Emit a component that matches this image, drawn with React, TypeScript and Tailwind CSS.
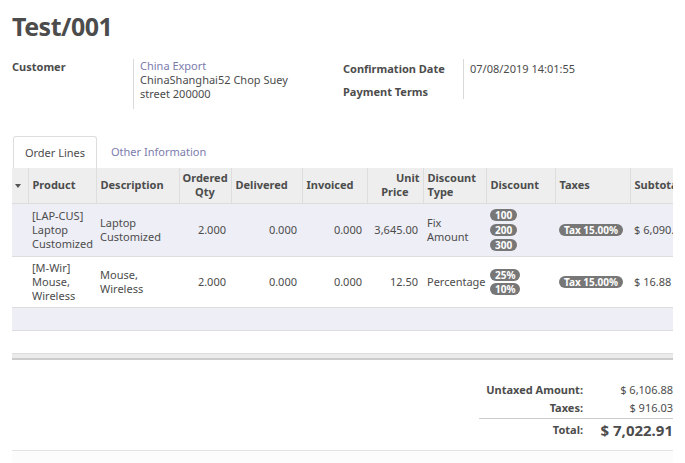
import React from 'react';

const font = { fontFamily: '"Noto Sans", "Open Sans", sans-serif' };

function Badge({ children }: { children: React.ReactNode }) {
  return (
    <span className="inline-block whitespace-nowrap rounded-full bg-[#777777] px-[5px] text-[10px] leading-[12px] font-bold text-white">
      {children}
    </span>
  );
}

const cols = [16, 68, 83, 52, 71, 65, 56, 63, 69, 75, 90];

export default function App() {
  return (
    <div className="w-[685px] h-[463px] overflow-hidden bg-white text-[#4c4c4c] text-[11px] leading-[14px]" style={font}>
      <div className="px-3 pt-[11px]">
        <h1 className="text-[25px] leading-[30px] font-bold tracking-[-0.5px] text-[#4c4c4c]">Test/001</h1>

        {/* header fields */}
        <div className="mt-[18px] flex">
          <div className="flex w-[331px]">
            <div className="w-[121px] font-bold pt-[1px]">Customer</div>
            <div className="border-l border-[#d9d9d9] pl-[6px] pb-[8px] w-[170px]">
              <div className="text-[#7c7bad]">China Export</div>
              <div>ChinaShanghai52 Chop Suey</div>
              <div>street 200000</div>
            </div>
          </div>
          <div className="flex">
            <div className="w-[120px] font-bold pt-[3px] flex flex-col gap-[9px]">
              <div>Confirmation Date</div>
              <div>Payment Terms</div>
            </div>
            <div className="border-l border-[#d9d9d9] pl-[6px] h-[40px] pt-[3px]">07/08/2019 14:01:55</div>
          </div>
        </div>

        {/* tabs */}
        <div className="mt-[27px] flex items-end">
          <div className="ml-[1px] w-[84px] h-[32px] border border-b-0 border-[#dddddd] rounded-t-[3px] flex items-center justify-center">
            Order Lines
          </div>
          <div className="ml-[14px] h-[32px] flex items-center text-[#7c7bad]">Other Information</div>
        </div>

        {/* table */}
        <div className="w-[661px] overflow-hidden">
          <table className="table-fixed border-collapse" style={{ width: cols.reduce((a, b) => a + b, 0) }}>
            <colgroup>
              {cols.map((w, i) => (
                <col key={i} style={{ width: w }} />
              ))}
            </colgroup>
            <thead>
              <tr className="h-[35px] bg-[#eeeeee] font-bold text-left">
                <th className="border-r border-[#dddddd] pl-[3px]">
                  <span className="inline-block border-x-[3px] border-t-[4px] border-x-transparent border-t-[#555] align-middle" />
                </th>
                <th className="border-r border-[#dddddd] px-[4px]">Product</th>
                <th className="border-r border-[#dddddd] px-[4px]">Description</th>
                <th className="border-r border-[#dddddd] px-[3px] text-center">Ordered<br />Qty</th>
                <th className="border-r border-[#dddddd] px-[4px]">Delivered</th>
                <th className="border-r border-[#dddddd] px-[4px]">Invoiced</th>
                <th className="border-r border-[#dddddd] px-[3px] text-right">
                  <div>Unit</div>
                  <div className="mr-[11px]">Price</div>
                </th>
                <th className="border-r border-[#dddddd] px-[4px]">Discount<br />Type</th>
                <th className="border-r border-[#dddddd] px-[4px]">Discount</th>
                <th className="border-r border-[#dddddd] px-[4px]">Taxes</th>
                <th className="px-[4px]">Subtotal</th>
              </tr>
            </thead>
            <tbody>
              <tr className="h-[53px] bg-[#eeeef6] border-t border-[#dddddd]">
                <td />
                <td className="px-[4px]">[LAP-CUS]<br />Laptop<br />Customized</td>
                <td className="px-[4px]">Laptop<br />Customized</td>
                <td className="px-[5px] text-right">2.000</td>
                <td className="px-[5px] text-right">0.000</td>
                <td className="px-[5px] text-right">0.000</td>
                <td className="px-[5px] text-right">3,645.00</td>
                <td className="px-[4px]">Fix<br />Amount</td>
                <td className="px-[4px]">
                  <div className="flex flex-col items-start gap-[3px]">
                    <Badge>100</Badge>
                    <Badge>200</Badge>
                    <Badge>300</Badge>
                  </div>
                </td>
                <td className="px-[4px]"><Badge>Tax 15.00%</Badge></td>
                <td className="px-[4px] whitespace-nowrap">$ 6,090.00</td>
              </tr>
              <tr className="h-[51px] bg-white border-t border-[#dddddd]">
                <td />
                <td className="px-[4px]">[M-Wir]<br />Mouse,<br />Wireless</td>
                <td className="px-[4px]">Mouse,<br />Wireless</td>
                <td className="px-[5px] text-right">2.000</td>
                <td className="px-[5px] text-right">0.000</td>
                <td className="px-[5px] text-right">0.000</td>
                <td className="px-[5px] text-right">12.50</td>
                <td className="px-[4px]">Percentage</td>
                <td className="px-[4px]">
                  <div className="flex flex-col items-start gap-[2px]">
                    <Badge>25%</Badge>
                    <Badge>10%</Badge>
                  </div>
                </td>
                <td className="px-[4px]"><Badge>Tax 15.00%</Badge></td>
                <td className="px-[4px] whitespace-nowrap">$ 16.88</td>
              </tr>
              <tr className="h-[23px] bg-[#eeeef6] border-t border-[#dddddd]">
                <td colSpan={11} />
              </tr>
              <tr className="h-[23px] bg-white border-t border-[#dddddd]">
                <td colSpan={11} />
              </tr>
            </tbody>
            <tfoot>
              <tr className="h-[6px] bg-[#ebebeb] border-t border-[#dddddd] border-b-2 border-b-[#cccccc]">
                <td colSpan={11} />
              </tr>
            </tfoot>
          </table>
        </div>

        {/* totals */}
        <div className="mt-[21px] flex justify-end">
          <div className="w-[194px] whitespace-nowrap">
            <div className="flex justify-between h-[18px] items-center">
              <span className="font-bold w-[104px] text-right">Untaxed Amount:</span>
              <span>$ 6,106.88</span>
            </div>
            <div className="flex justify-between h-[18px] items-center">
              <span className="font-bold w-[104px] text-right">Taxes:</span>
              <span>$ 916.03</span>
            </div>
            <div className="flex justify-between h-[22px] items-center border-t border-[#cccccc] mt-[1px]">
              <span className="font-bold w-[104px] text-right">Total:</span>
              <span className="font-bold text-[15px]">$ 7,022.91</span>
            </div>
          </div>
        </div>
        <div className="mt-[10px] border-t border-[#e3e3e3] h-[20px] bg-[#fcfcfc]" />
      </div>
    </div>
  );
}
